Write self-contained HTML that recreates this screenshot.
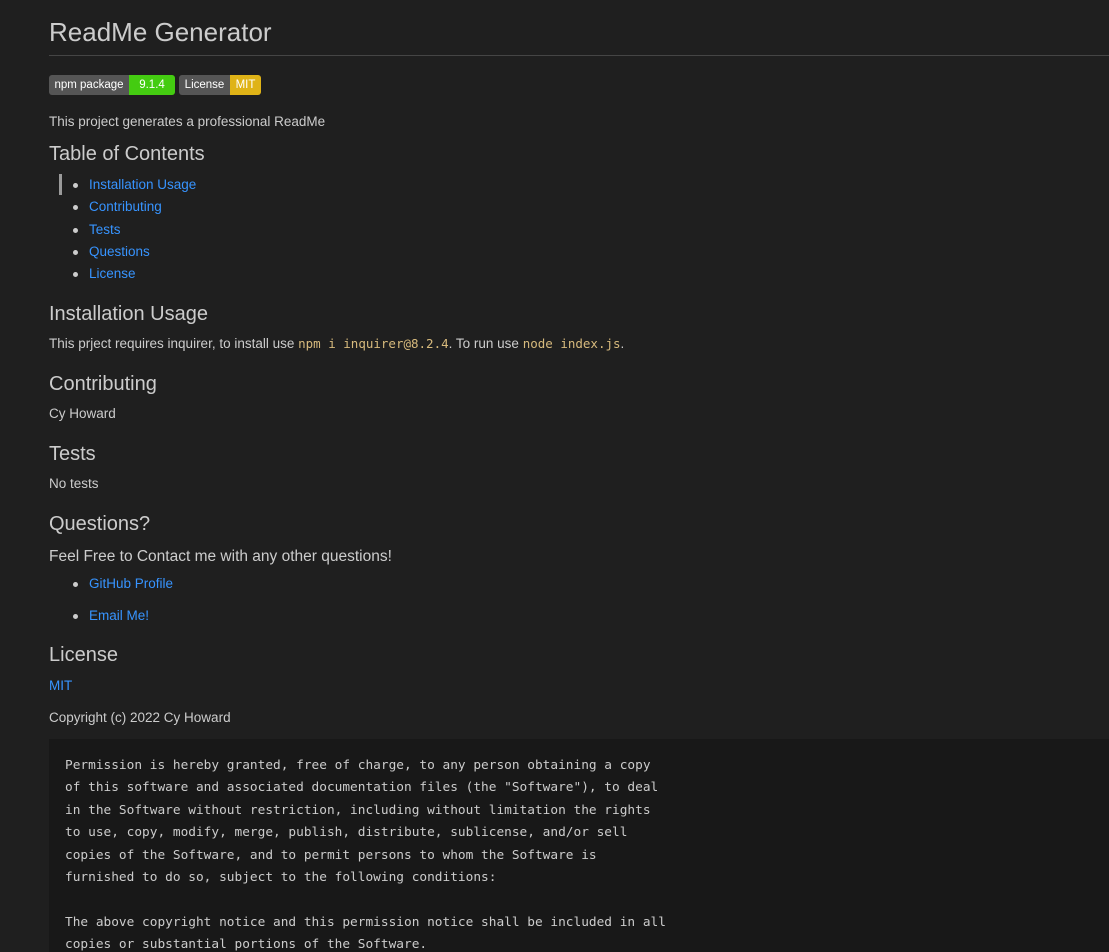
<!DOCTYPE html>
<html><head><meta charset="utf-8"><style>
html,body{margin:0;padding:0;background:#1f1f1f;width:1109px;height:952px;overflow:hidden}
body{font-family:"Liberation Sans",sans-serif;color:#cccccc;font-size:13.5px;position:relative}
.a{position:absolute;left:49px;white-space:nowrap;line-height:1}
h1,h2{font-weight:normal;margin:0}
.h1{font-size:26px;top:19px}
.h2{font-size:20px}
a{color:#3794ff;text-decoration:none}
.hr{position:absolute;left:49px;right:0;top:55px;height:1px;background:#454545}
.badge{position:absolute;top:75px;height:20px;border-radius:3px;overflow:hidden;display:flex;font-size:11.5px;color:#fff;line-height:20px}
.badge span{padding:0 5px;text-align:center}
.li{position:absolute;left:89px;line-height:1}
.li:before{content:"";position:absolute;left:-16px;top:5px;width:5px;height:5px;border-radius:50%;background:#cccccc}
code{font-family:"DejaVu Sans Mono","Liberation Mono",monospace;color:#d7ba7d;font-size:12.5px}
pre{position:absolute;left:49px;right:0;top:739px;height:197px;overflow:hidden;margin:0;background:#181818;padding:16px 16px 0;font-family:"DejaVu Sans Mono","Liberation Mono",monospace;font-size:12.8px;line-height:22.4px;color:#cccccc}
</style></head><body>
<h1 class="a h1">ReadMe Generator</h1>
<div class="hr"></div>
<div class="badge" style="left:49px;width:126px"><span style="background:#555;width:70px">npm package</span><span style="background:#4c1;flex:1">9.1.4</span></div>
<div class="badge" style="left:179px;width:82px"><span style="background:#555;width:41px">License</span><span style="background:#dfb317;flex:1">MIT</span></div>
<div class="a" style="top:115px">This project generates a professional ReadMe</div>
<h2 class="a h2" style="top:144px">Table of Contents</h2>
<div style="position:absolute;left:59px;top:174px;width:3px;height:21px;background:#9a9a9a"></div>
<div class="li" style="top:178px"><a>Installation Usage</a></div>
<div class="li" style="top:200px"><a>Contributing</a></div>
<div class="li" style="top:223px"><a>Tests</a></div>
<div class="li" style="top:245px"><a>Questions</a></div>
<div class="li" style="top:267px"><a>License</a></div>
<h2 class="a h2" style="top:304px">Installation Usage</h2>
<div class="a" style="top:337px">This prject requires inquirer, to install use <code>npm i inquirer@8.2.4</code>. To run use <code>node index.js</code>.</div>
<h2 class="a h2" style="top:374px">Contributing</h2>
<div class="a" style="top:407px">Cy Howard</div>
<h2 class="a h2" style="top:444px">Tests</h2>
<div class="a" style="top:477px">No tests</div>
<h2 class="a h2" style="top:514px">Questions?</h2>
<div class="a" style="top:549px;font-size:15.5px">Feel Free to Contact me with any other questions!</div>
<div class="li" style="top:577px"><a>GitHub Profile</a></div>
<div class="li" style="top:609px"><a>Email Me!</a></div>
<h2 class="a h2" style="top:645px">License</h2>
<div class="a" style="top:679px"><a>MIT</a></div>
<div class="a" style="top:711px">Copyright (c) 2022 Cy Howard</div>
<pre>Permission is hereby granted, free of charge, to any person obtaining a copy
of this software and associated documentation files (the "Software"), to deal
in the Software without restriction, including without limitation the rights
to use, copy, modify, merge, publish, distribute, sublicense, and/or sell
copies of the Software, and to permit persons to whom the Software is
furnished to do so, subject to the following conditions:

The above copyright notice and this permission notice shall be included in all
copies or substantial portions of the Software.</pre>
</body></html>
